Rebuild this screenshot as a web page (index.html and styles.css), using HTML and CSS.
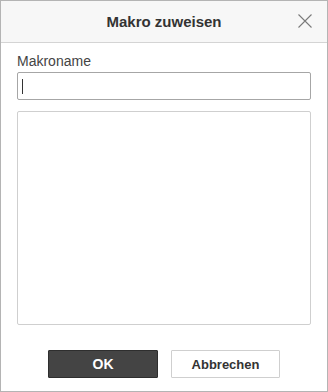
FILE: index.html
```html
<!DOCTYPE html>
<html lang="de">
<head>
  <meta charset="UTF-8">
  <title>Makro zuweisen</title>
  <link rel="stylesheet" href="styles.css">
</head>
<body>
  <div class="dialog">
    <div class="header">
      <span class="title">Makro zuweisen</span>
      <span class="close">
        <svg width="14" height="14" viewBox="0 0 14 14">
          <path d="M0.5 0.5 L13.5 13.5 M13.5 0.5 L0.5 13.5" stroke="#7a7a7a" stroke-width="1.1" fill="none"/>
        </svg>
      </span>
    </div>
    <div class="content">
      <div class="label">Makroname</div>
      <div class="input"><span class="caret"></span></div>
      <div class="list"></div>
      <div class="buttons">
        <div class="btn btn-ok">OK</div>
        <div class="btn btn-cancel">Abbrechen</div>
      </div>
    </div>
  </div>
</body>
</html>
```

FILE: styles.css
```css
body {
  margin: 0;
  font-family: 'Liberation Sans', Arial, sans-serif;
  background: #fff;
}
.dialog {
  width: 328px;
  height: 392px;
  box-sizing: border-box;
  border: 1px solid #b4b4b4;
  display: flex;
  flex-direction: column;
}
.header {
  height: 41px;
  flex-shrink: 0;
  background: #f7f7f7;
  border-bottom: 1px solid #d4d4d4;
  display: flex;
  align-items: center;
  justify-content: center;
  position: relative;
}
.title {
  font-size: 15px;
  font-weight: bold;
  color: #333;
}
.close {
  position: absolute;
  right: 15px;
  top: 13px;
  width: 14px;
  height: 14px;
}
.close svg {
  display: block;
}
.content {
  padding: 10px 16px 0 16px;
  display: flex;
  flex-direction: column;
}
.label {
  font-size: 14px;
  line-height: 17px;
  color: #444;
  margin-bottom: 2px;
}
.input {
  height: 28px;
  box-sizing: border-box;
  border: 1px solid #a6a6a6;
  border-radius: 2px;
  display: flex;
  align-items: center;
  padding-left: 4px;
}
.caret {
  width: 1px;
  height: 15px;
  background: #333;
}
.list {
  margin-top: 11px;
  height: 214px;
  box-sizing: border-box;
  border: 1px solid #cfcfcf;
  border-radius: 2px;
}
.buttons {
  margin-top: 25px;
  display: flex;
  justify-content: center;
  gap: 13px;
}
.btn {
  width: 110px;
  height: 28px;
  box-sizing: border-box;
  display: flex;
  align-items: center;
  justify-content: center;
  font-size: 13px;
  font-weight: bold;
  border-radius: 1px;
}
.btn-ok {
  background: #444;
  border: 1px solid #2e2e2e;
  color: #fff;
  font-size: 14px;
}
.btn-cancel {
  background: #fff;
  border: 1px solid #cfcfcf;
  color: #333;
  width: 109px;
}
```
